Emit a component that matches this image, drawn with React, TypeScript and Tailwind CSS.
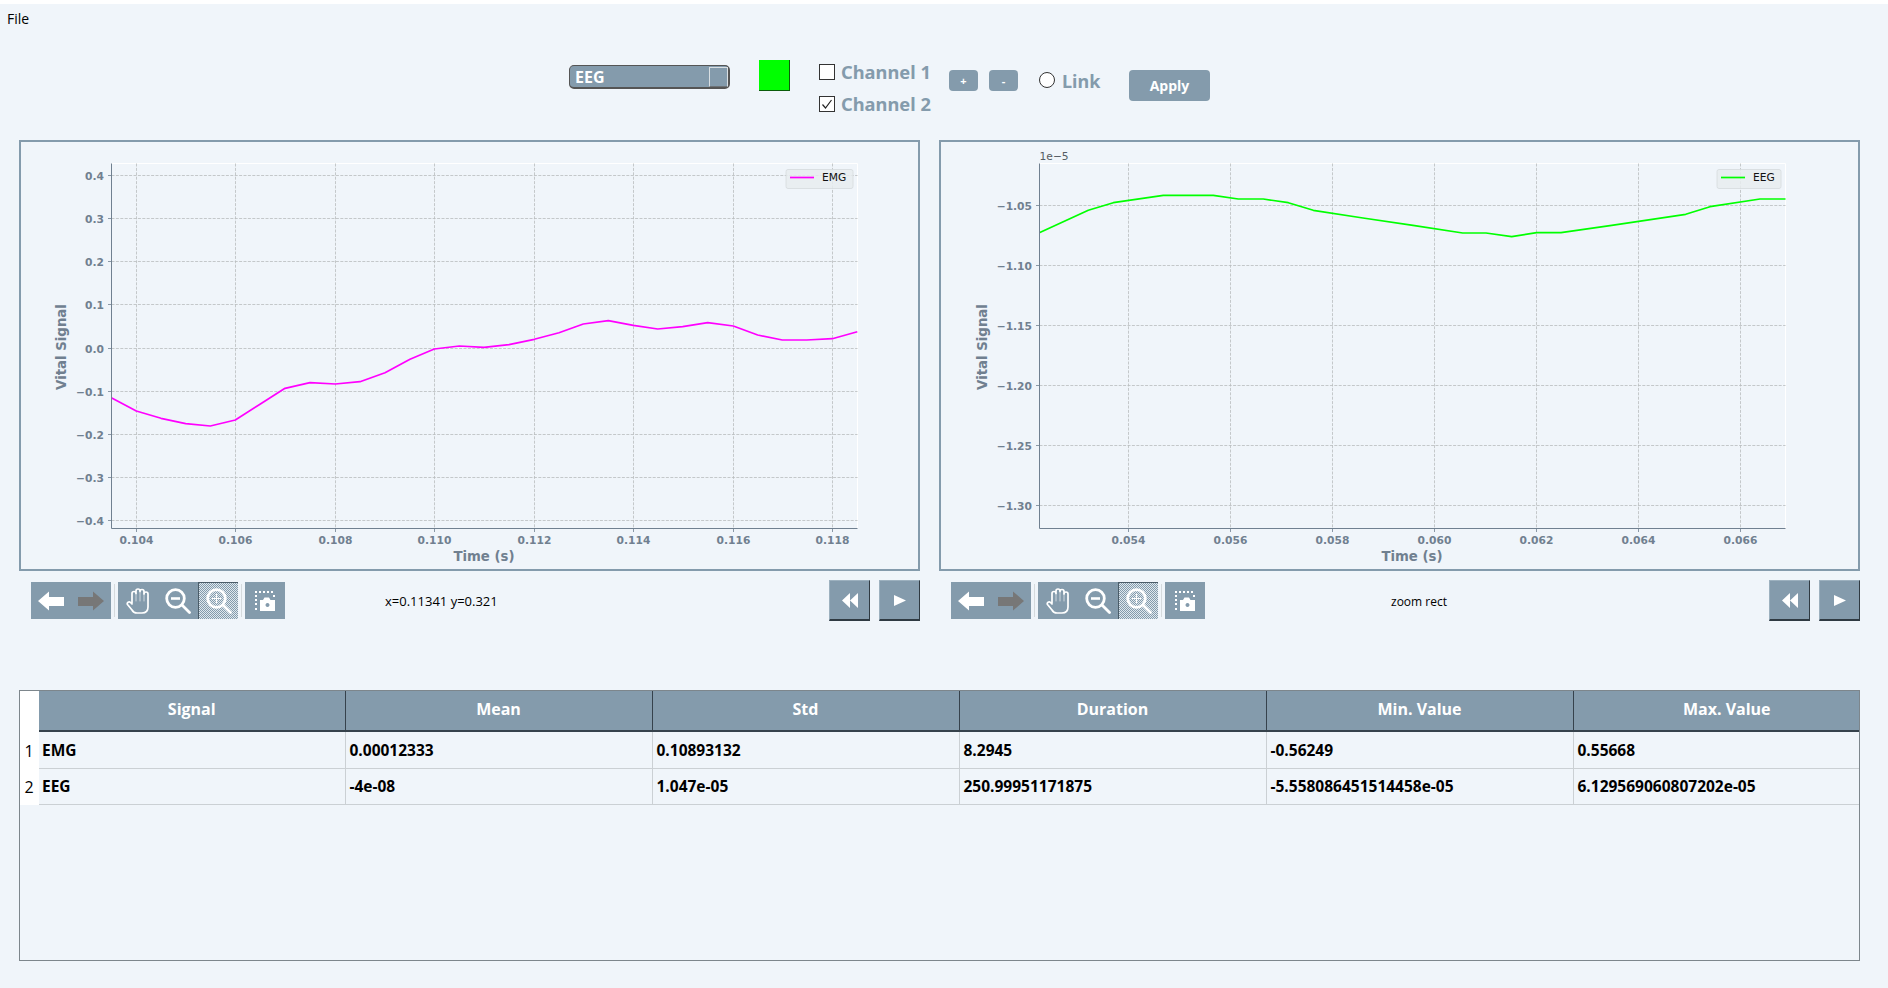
import React from "react";

const SLATE = "#708090";

type Pt = [number, number];

const emg: Pt[] = [[111.3,397.7],[136.3,411],[161,418.3],[185.7,423.7],[210.3,426],[235.3,420],[260,404.3],[285,388.3],[310,382.7],[335.3,384],[360,381.7],[385,372.7],[410,359.3],[434.3,349],[459.3,346],[484,347.3],[509,344.7],[534.3,339.3],[559,332.7],[583.3,324],[608.3,320.7],[633.3,325.3],[657.7,329],[682.7,326.7],[707.7,322.7],[733.3,326],[757.7,335],[782.3,340],[806.7,340],[832.3,338.7],[857.3,331.7]];
const eeg: Pt[] = [[1039.3,232.7],[1088.3,210.3],[1113.3,202.7],[1163.3,195.3],[1213.3,195.3],[1238.3,199],[1263.3,199],[1288.3,202.7],[1313.3,210.3],[1363,218],[1413,225.3],[1462.7,233],[1486,233],[1511.7,236.7],[1536.7,232.7],[1561,232.7],[1611.7,225.3],[1685.7,214.3],[1710,206.7],[1760,199],[1785.5,199]];

interface ChartProps {
  width: number;
  originX: number;
  left: number;
  right: number;
  xTicks: [number, string][];
  yTicks: [number, string][];
  data: Pt[];
  color: string;
  legend: string;
  legendX: number;
  ylabelX: number;
  xlabelX: number;
  offset?: string;
}

function Chart({ width, originX, left, right, xTicks, yTicks, data, color, legend, legendX, ylabelX, xlabelX, offset }: ChartProps) {
  const top = 163.5;
  const bottom = 528.5;
  const ox = originX;
  const oy = 142;
  return (
    <div className="border-2 border-[#849bac] h-[431px] shrink-0" style={{ width }}>
      <svg width={width - 4} height={427} className="block" viewBox={`${ox} ${oy} ${width - 4} 427`}>
        <line x1={left} y1={top} x2={right} y2={top} stroke="#ffffff" strokeWidth={1} />
        <line x1={right} y1={top} x2={right} y2={bottom} stroke="#ffffff" strokeWidth={1} />
        {xTicks.map(([x]) => (
          <line key={x} x1={x} y1={top} x2={x} y2={bottom} stroke="#b9bcbe" strokeWidth={0.8} strokeDasharray="3 1.4" />
        ))}
        {yTicks.map(([y]) => (
          <line key={y} x1={left} y1={y} x2={right} y2={y} stroke="#b9bcbe" strokeWidth={0.8} strokeDasharray="3 1.4" />
        ))}
        <polyline points={data.map((p) => p.join(",")).join(" ")} fill="none" stroke={color} strokeWidth={1.7} strokeLinejoin="round" />
        <line x1={left} y1={top} x2={left} y2={bottom} stroke={SLATE} strokeWidth={1} />
        <line x1={left} y1={bottom} x2={right} y2={bottom} stroke={SLATE} strokeWidth={1} />
        {xTicks.map(([x, t]) => (
          <g key={t}>
            <line x1={x} y1={bottom} x2={x} y2={bottom + 3.5} stroke={SLATE} strokeWidth={0.8} />
            <text x={x} y={544} textAnchor="middle" fontFamily="'DejaVu Sans', sans-serif" fontWeight={700} fontSize={10.7} fill={SLATE}>{t}</text>
          </g>
        ))}
        {yTicks.map(([y, t]) => (
          <g key={t}>
            <line x1={left - 3.5} y1={y} x2={left} y2={y} stroke={SLATE} strokeWidth={0.8} />
            <text x={left - 7.5} y={y + 4} textAnchor="end" fontFamily="'DejaVu Sans', sans-serif" fontWeight={700} fontSize={10.7} fill={SLATE}>{t}</text>
          </g>
        ))}
        <text x={xlabelX} y={561} textAnchor="middle" fontFamily="'DejaVu Sans', sans-serif" fontWeight={700} fontSize={13.3} fill={SLATE}>Time (s)</text>
        <text transform={`translate(${ylabelX} 347) rotate(-90)`} textAnchor="middle" fontFamily="'DejaVu Sans', sans-serif" fontWeight={700} fontSize={13.3} fill={SLATE}>Vital Signal</text>
        {offset && (
          <text x={left} y={160} fontFamily="'DejaVu Sans', sans-serif" fontSize={10.7} fill="#555c63">{offset}</text>
        )}
        <rect x={legendX} y={169.5} width={right - legendX - 4.5} height={19} rx={2} fill="#e8ecef" fillOpacity={0.85} stroke="#d6dadd" strokeWidth={0.8} />
        <line x1={legendX + 4} y1={177.5} x2={legendX + 28} y2={177.5} stroke={color} strokeWidth={1.7} />
        <text x={legendX + 36} y={180.5} fontFamily="'DejaVu Sans', sans-serif" fontSize={10.7} fill="#111111">{legend}</text>
      </svg>
    </div>
  );
}

const wrap = "w-10 h-[37px] flex items-center justify-center";

function Back() {
  return <svg width="26" height="20" viewBox="0 0 26 20"><path d="M0 10 L11 0.5 V6 H26 V15 H11 V19.5 Z" fill="#fff" /></svg>;
}
function Forward() {
  return <svg width="26" height="20" viewBox="0 0 26 20"><path d="M26 10 L15 0.5 V6 H0 V15 H15 V19.5 Z" fill="#777777" /></svg>;
}
function Hand() {
  return (
    <svg width="24" height="26" viewBox="0 0 24 26" fill="none" stroke="#fff" strokeWidth="1.7" strokeLinejoin="round" strokeLinecap="round">
      <path d="M6 15 V5.5 a2 2 0 0 1 4 0 V3 a2 2 0 0 1 4 0 V3.5 a2 2 0 0 1 4 0 V6 a2 2 0 0 1 4 0 V19 c0 4 -2.5 6 -6 6 H11 c-2.5 0 -4 -1 -5 -3 L1.5 16.5 c-1 -2 1.5 -3.5 3 -2 L6 16" />
      <path d="M10 5.5 V13 M14 3.5 V13 M18 5.5 V13" strokeWidth="1" opacity="0.6" />
    </svg>
  );
}
function Magnifier({ mode }: { mode: "in" | "out" }) {
  return (
    <svg width="26" height="26" viewBox="0 0 26 26" fill="none" stroke="#fff">
      <circle cx="10.5" cy="10.5" r="8.8" strokeWidth="2.8" />
      <path d="M17 17 L24.5 24.5" strokeWidth="2.8" strokeLinecap="round" />
      {mode === "out" ? (
        <path d="M6 10.5 H15" strokeWidth="2.6" />
      ) : (
        <path d="M6 10.5 H15 M10.5 6 V15" strokeWidth="1.2" />
      )}
    </svg>
  );
}
function Shot() {
  return (
    <svg width="20" height="20" viewBox="0 0 20 20" fill="#fff">
      <path d="M0 0h2v2H0zM4 0h2v2H4zM8 0h2v2H8zM12 0h2v2h-2zM16 0h2v2h-2zM18 4h2v2h-2zM0 4h2v2H0zM0 8h2v2H0zM0 12h2v2H0zM0 17h2v2H0z" />
      <path fillRule="evenodd" d="M5 9 H8 L9.5 6.5 H14 L15.5 9 H20 V20 H5 Z M12.5 12 a2 2 0 1 0 0.01 0 Z" />
    </svg>
  );
}

function Toolbar() {
  return (
    <div className="flex items-center">
      <div className="flex bg-[#849bac]">
        <div className={wrap}><Back /></div>
        <div className={wrap}><Forward /></div>
      </div>
      <div className="w-px h-[33px] bg-[#d5dadd] mx-[3px]" />
      <div className="flex bg-[#849bac]">
        <div className={wrap}><Hand /></div>
        <div className={wrap}><Magnifier mode="out" /></div>
        <div className={`${wrap} border-t border-l border-[#4b5c68] bg-[repeating-conic-gradient(#dfe8ee_0_25%,#849bac_0_50%)] bg-[length:2px_2px]`}><Magnifier mode="in" /></div>
      </div>
      <div className="w-px h-[33px] bg-[#d5dadd] mx-[3px]" />
      <div className="flex bg-[#849bac]">
        <div className={wrap}><Shot /></div>
      </div>
    </div>
  );
}

function PlayBtn({ children }: { children: React.ReactNode }) {
  return (
    <div className="w-[41px] h-[41px] flex items-center justify-center bg-[#849bac] border-t border-l border-t-[#9db1bf] border-l-[#9db1bf] border-b-2 border-r border-b-[#2f3a42] border-r-[#2f3a42]">
      {children}
    </div>
  );
}

function PlayRow() {
  return (
    <div className="flex gap-[9px]">
      <PlayBtn>
        <svg width="16" height="15" viewBox="0 0 16 15" fill="#fff"><path d="M8 0 V15 L0 7.5 Z M16 0 V15 L8 7.5 Z" /></svg>
      </PlayBtn>
      <PlayBtn>
        <svg width="12" height="11" viewBox="0 0 12 11"><path d="M0 0 L12 5.5 L0 11 Z" fill="#fff" /></svg>
      </PlayBtn>
    </div>
  );
}

function SmallBtn({ label }: { label: string }) {
  return (
    <div className="w-[29px] h-[21px] rounded-[4px] bg-[#849bac] text-white font-bold text-[11px] flex items-center justify-center leading-none">{label}</div>
  );
}

function ChannelRow({ label, checked }: { label: string; checked?: boolean }) {
  return (
    <div className="flex items-center gap-[6px] h-4">
      <div className="w-4 h-4 border border-[#333] bg-white flex items-center justify-center">
        {checked && (
          <svg width="12" height="12" viewBox="0 0 12 12" fill="none" stroke="#222" strokeWidth="1.2"><path d="M1.5 6.5 L4.5 10 L10.5 2" /></svg>
        )}
      </div>
      <span className="font-['Noto_Sans','Open_Sans',sans-serif] font-bold text-[18.3px] leading-none text-[#849bac]">{label}</span>
    </div>
  );
}

const headers = ["Signal", "Mean", "Std", "Duration", "Min. Value", "Max. Value"];
const rows = [
  ["EMG", "0.00012333", "0.10893132", "8.2945", "-0.56249", "0.55668"],
  ["EEG", "-4e-08", "1.047e-05", "250.99951171875", "-5.558086451514458e-05", "6.129569060807202e-05"],
];

export default function App() {
  return (
    <div className="w-[1888px] h-[988px] overflow-hidden bg-[#f0f5fa] flex flex-col font-['Open_Sans','Noto_Sans',sans-serif]">
      <div className="h-[4px] bg-white shrink-0" />
      <div className="h-[28px] px-[7px] flex items-center text-[14px] text-black shrink-0">File</div>

      <div className="h-[108px] shrink-0 flex items-start pl-[569px]">
        <div className="mt-[33px] w-[161px] h-[24px] rounded-[5px] bg-[#849bac] border border-[#555] border-b-2 border-r-2 flex items-center justify-between pl-[5px] pr-0">
          <span className="text-white font-bold text-[16px] leading-none">EEG</span>
          <div className="w-[19px] h-[20px] border border-[#d9dfe3] border-b-[#6d7378]" />
        </div>
        <div className="mt-[28px] ml-[29px] w-[31px] h-[31px] bg-[#00ff00] border-b border-r border-[#0a5c0a]" />
        <div className="mt-[32px] ml-[29px] flex flex-col gap-[16px] w-[130px]">
          <ChannelRow label="Channel 1" />
          <ChannelRow label="Channel 2" checked />
        </div>
        <div className="mt-[38px] flex gap-[11px]">
          <SmallBtn label="+" />
          <SmallBtn label="-" />
        </div>
        <div className="mt-[40px] ml-[21px] w-[16px] h-[16px] rounded-full border border-[#333] bg-white" />
        <span className="mt-[39px] ml-[7px] w-[67px] font-['Noto_Sans','Open_Sans',sans-serif] font-bold text-[18px] leading-[20px] text-[#849bac]">Link</span>
        <div className="mt-[38px] w-[81px] h-[31px] rounded-[4px] bg-[#849bac] text-white font-bold text-[14px] flex items-center justify-center">Apply</div>
      </div>

      <div className="flex pl-[19px] gap-[19px] shrink-0">
        <Chart
          width={901}
          originX={21}
          left={111.5}
          right={857.5}
          xTicks={[[136.5,"0.104"],[235.5,"0.106"],[335.5,"0.108"],[434.5,"0.110"],[534.5,"0.112"],[633.5,"0.114"],[733.5,"0.116"],[832.5,"0.118"]]}
          yTicks={[[175.5,"0.4"],[218.5,"0.3"],[261.5,"0.2"],[304.5,"0.1"],[348.5,"0.0"],[391.5,"−0.1"],[434.5,"−0.2"],[477.5,"−0.3"],[520.5,"−0.4"]]}
          data={emg}
          color="#ff00ff"
          legend="EMG"
          legendX={786}
          ylabelX={66}
          xlabelX={484}
        />
        <Chart
          width={921}
          originX={941}
          left={1039.5}
          right={1785.5}
          xTicks={[[1128.5,"0.054"],[1230.5,"0.056"],[1332.5,"0.058"],[1434.5,"0.060"],[1536.5,"0.062"],[1638.5,"0.064"],[1740.5,"0.066"]]}
          yTicks={[[205.5,"−1.05"],[265.5,"−1.10"],[325.5,"−1.15"],[385.5,"−1.20"],[445.5,"−1.25"],[505.5,"−1.30"]]}
          data={eeg}
          color="#00ff00"
          legend="EEG"
          legendX={1717}
          ylabelX={987}
          xlabelX={1412}
          offset="1e−5"
        />
      </div>

      <div className="flex pl-[19px] gap-[19px] mt-[9px] shrink-0 text-black">
        <div className="w-[901px] flex items-center pl-[12px]">
          <Toolbar />
          <span className="ml-[100px] pt-[2px] flex-1 text-[13px]">x=0.11341 y=0.321</span>
          <PlayRow />
        </div>
        <div className="w-[921px] flex items-center pl-[12px]">
          <Toolbar />
          <span className="ml-[186px] pt-[2px] flex-1 text-[12px]">zoom rect</span>
          <PlayRow />
        </div>
      </div>

      <div className="mt-[69px] ml-[19px] w-[1841px] h-[271px] border border-[#7d868c] shrink-0">
        <div className="flex">
          <div className="w-[19px] bg-white flex flex-col shrink-0">
            <div className="h-[40px]" />
            <div className="h-[37px] flex items-center justify-center text-[16px] pr-[1px] pt-[2px] text-black">1</div>
            <div className="h-[36px] flex items-center justify-center text-[16px] pr-[1px] pt-[2px] text-black">2</div>
          </div>
          <table className="border-collapse table-fixed w-[1820px]">
            <colgroup>
              <col className="w-[306px]" />
              <col className="w-[307px]" />
              <col className="w-[307px]" />
              <col className="w-[307px]" />
              <col className="w-[307px]" />
              <col className="w-[286px]" />
            </colgroup>
            <thead>
              <tr className="h-[40px]">
                {headers.map((h, i) => (
                  <th key={h} className={`bg-[#849bac] text-white font-bold text-[16px] leading-none pt-0 pb-[4px] border-b-2 border-b-[#36424c] ${i < 5 ? "border-r border-r-[#36424c] px-0" : "pl-[21px] pr-0"}`}>{h}</th>
                ))}
              </tr>
            </thead>
            <tbody>
              {rows.map((r, ri) => (
                <tr key={r[0]} className={ri === 0 ? "h-[37px]" : "h-[36px]"}>
                  {r.map((c, i) => (
                    <td key={i} className={`pt-[2px] pb-0 pr-[3px] text-[15.5px] font-bold text-black border-b border-b-[#cbd0d4] ${i === 0 ? "pl-[3px]" : "pl-[4px]"} ${i < 5 ? "border-r border-r-[#cbd0d4]" : ""}`}>{c}</td>
                  ))}
                </tr>
              ))}
            </tbody>
          </table>
        </div>
      </div>
    </div>
  );
}
